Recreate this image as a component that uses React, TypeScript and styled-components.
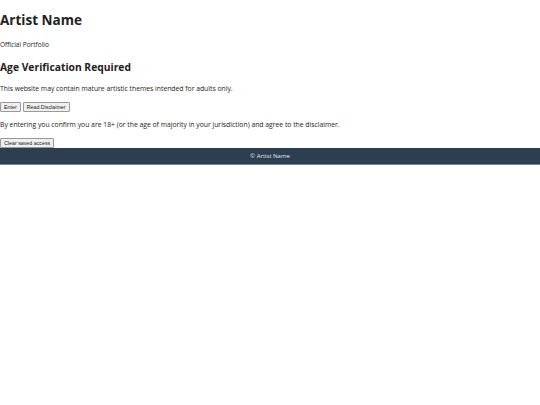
import styled, { createGlobalStyle } from 'styled-components';

const GlobalStyle = createGlobalStyle`
  body {
    margin: 0;
    font-family: 'Open Sans', 'Liberation Sans', sans-serif;
    color: #222;
    background: #fff;
  }
`;

const Main = styled.main`
  display: flex;
  flex-direction: column;
  align-items: flex-start;
`;

const Title = styled.h1`
  font-size: 13.5px;
  font-weight: 700;
  margin: 12px 0 0;
  line-height: 1.2;
`;

const Tagline = styled.p`
  font-size: 6.5px;
  margin: 12px 0 0;
`;

const Heading = styled.h2`
  font-size: 10.3px;
  font-weight: 700;
  margin: 12px 0 0;
  line-height: 1.2;
`;

const Text = styled.p<{ $top: number }>`
  font-size: 6.8px;
  margin: ${(p) => p.$top}px 0 0;
`;

const Actions = styled.div`
  display: flex;
  gap: 2px;
  margin-top: 9px;
`;

const Button = styled.button`
  font-family: 'Liberation Sans', Arial, sans-serif;
  font-size: 5.3px;
  line-height: 6px;
  padding: 1px 3px;
  border: 1px solid #999;
  border-radius: 1px;
  background: #efefef;
  color: #222;
`;

const ClearButton = styled(Button)`
  margin-top: 9px;
`;

const Footer = styled.footer`
  background: #2c3e50;
  color: #e8ecef;
  text-align: center;
  font-size: 6px;
  padding: 4px 0;
  border-bottom: 1px solid #7a8691;
`;

export default function App() {
  return (
    <>
      <GlobalStyle />
      <Main>
        <Title>Artist Name</Title>
        <Tagline>Official Portfolio</Tagline>
        <Heading>Age Verification Required</Heading>
        <Text $top={10}>This website may contain mature artistic themes intended for adults only.</Text>
        <Actions>
          <Button>Enter</Button>
          <Button>Read Disclaimer</Button>
        </Actions>
        <Text $top={8}>
          By entering you confirm you are 18+ (or the age of majority in your jurisdiction) and agree to the disclaimer.
        </Text>
        <ClearButton>Clear saved access</ClearButton>
      </Main>
      <Footer>© Artist Name</Footer>
    </>
  );
}
